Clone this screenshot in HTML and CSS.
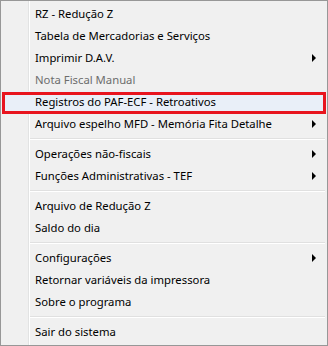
FILE: index.html
```html
<!DOCTYPE html>
<html>
  <head>
    <title>Menu</title>
    <link rel="stylesheet" href="styles.css">
  </head>
  <body>
    <nav class='menu'>
      <ul>
        <li class='item'>RZ - Redução Z</li>
        <li class='item'>Tabela de Mercadorias e Serviços</li>
        <li class='item sub'>Imprimir D.A.V.</li>
        <li class='item disabled'>Nota Fiscal Manual</li>
        <li class='item marked'>Registros do PAF-ECF - Retroativos</li>
        <li class='item sub'>Arquivo espelho MFD - Memória Fita Detalhe</li>
        <li class='sep'></li>
        <li class='item sub'>Operações não-fiscais</li>
        <li class='item sub'>Funções Administrativas - TEF</li>
        <li class='sep'></li>
        <li class='item'>Arquivo de Redução Z</li>
        <li class='item'>Saldo do dia</li>
        <li class='sep'></li>
        <li class='item sub'>Configurações</li>
        <li class='item'>Retornar variáveis da impressora</li>
        <li class='item'>Sobre o programa</li>
        <li class='sep'></li>
        <li class='item'>Sair do sistema</li>
      </ul>
    </nav>
  </body>
</html>
```

FILE: styles.css
```css
html, body {
  margin: 0;
  width: 328px;
  height: 346px;
  background: #f0f0f0;
  font-family: 'Noto Sans', sans-serif;
  font-size: 11.3px;
  color: #000;
}

/* menu box */
.menu {
  box-sizing: border-box;
  width: 328px;
  height: 346px;
  border: 1px solid #979797;
  padding: 2px;
  /* icon gutter line */
  background:
    linear-gradient(to right, transparent 27px, #e2e3e3 27px, #e2e3e3 28px, #fff 28px, #fff 29px, transparent 29px),
    #f0f0f0;
}

.menu ul {
  list-style: none;
  margin: 0;
  padding: 0;
}

.item {
  position: relative;
  height: 22px;
  line-height: 22px;
  padding-left: 32px;
  white-space: nowrap;
}

.item.disabled {
  color: #6d6d6d;
}

/* submenu arrow */
.item.sub::after {
  content: '';
  position: absolute;
  right: 9px;
  top: 7px;
  border-left: 4px solid #000;
  border-top: 4px solid transparent;
  border-bottom: 4px solid transparent;
}

.item.marked {
  background: #e9eff8;
}

.item.marked::before {
  content: '';
  position: absolute;
  left: -1px;
  right: -1px;
  top: 1px;
  bottom: -1px;
  border: 3px solid #e8141e;
}

.sep {
  height: 8px;
  margin-left: 27px;
  background: linear-gradient(to bottom, transparent 3px, #e0e0e0 3px, #e0e0e0 4px, #fff 4px, #fff 5px, transparent 5px);
}
```
